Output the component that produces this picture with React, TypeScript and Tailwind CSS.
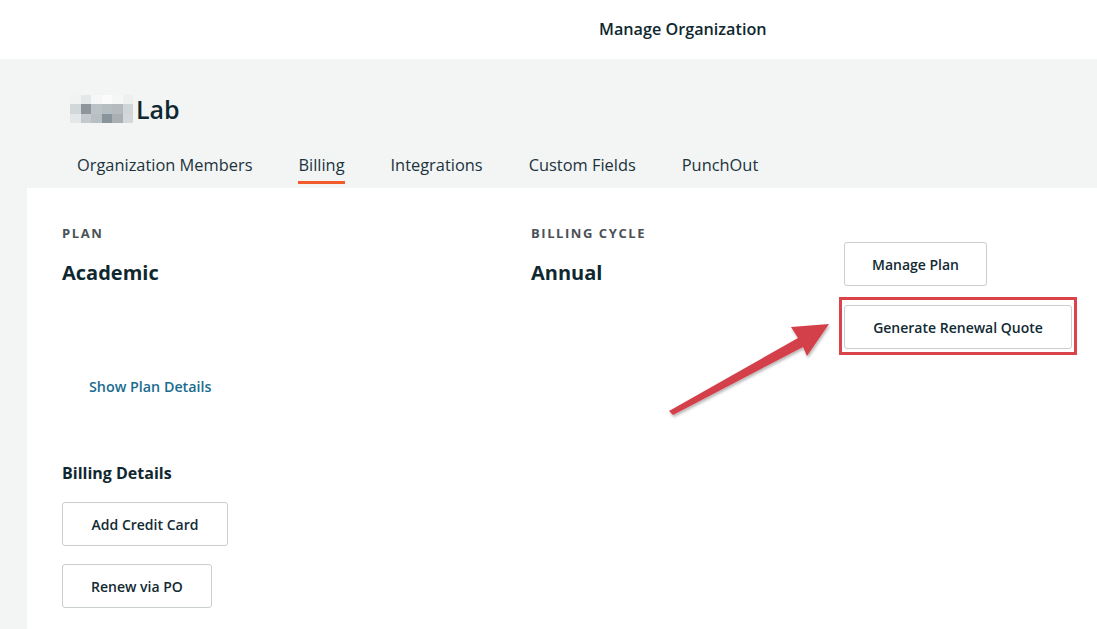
import React from 'react'

const font = { fontFamily: '"Open Sans", "Liberation Sans", sans-serif' }

const tabs = ['Organization Members', 'Billing', 'Integrations', 'Custom Fields', 'PunchOut']

function Pixelated() {
  // censored org name: a coarse mosaic of greys
  const rows = [
    ['bg-[#f1f3f3]', 'bg-[#e4e8e9]', 'bg-[#f6f7f7]', 'bg-[#fbfbfb]', 'bg-[#f5f6f6]', 'bg-[#eef0f0]'],
    ['bg-[#d2d7d9]', 'bg-[#8c969b]', 'bg-[#bcc3c6]', 'bg-[#b7bec1]', 'bg-[#b4bbbe]', 'bg-[#d0d5d7]'],
    ['bg-[#e3e7e8]', 'bg-[#c3c9cc]', 'bg-[#b8bfc2]', 'bg-[#88939a]', 'bg-[#a8b0b4]', 'bg-[#d3d8da]'],
  ]
  return (
    <div className="flex flex-col">
      {rows.map((row, i) => (
        <div key={i} className="flex">
          {row.map((c, j) => (
            <div key={j} className={`h-[9.5px] w-[10.5px] ${c}`} />
          ))}
        </div>
      ))}
    </div>
  )
}

function OutlineButton({ children, className = '' }: { children: React.ReactNode; className?: string }) {
  return (
    <button
      className={`flex h-[44px] items-center justify-center rounded-[3px] border border-[#c9ced1] bg-white text-[14px] font-semibold text-[#112a33] ${className}`}
    >
      {children}
    </button>
  )
}

export default function App() {
  return (
    <div className="relative min-h-screen w-full overflow-hidden bg-[#f3f5f5] text-[#112a33]" style={font}>
      <header className="flex h-[59px] items-center bg-white pl-[599px]">
        <span className="text-[16.2px] font-semibold text-[#0f2830]">Manage Organization</span>
      </header>

      <div className="flex items-center pl-[70px] pt-[35px]">
        <Pixelated />
        <span className="ml-[3px] text-[25px] font-semibold leading-[30px] text-[#0f2830]">Lab</span>
      </div>

      <nav className="mt-[30px] flex gap-[46px] pl-[77px]">
        {tabs.map((t) => (
          <div key={t} className="flex flex-col items-stretch">
            <span className="text-[16.4px] leading-[22px] text-[#1c333b]">{t}</span>
            <span className={`mt-[5px] h-[3px] ${t === 'Billing' ? 'bg-[#f25b2b]' : 'bg-transparent'}`} />
          </div>
        ))}
      </nav>

      <main className="ml-[27px] mt-[4px] min-h-[460px] bg-white pl-[35px] pt-[37px]">
        <div className="flex">
          <div className="w-[469px]">
            <div className="text-[13px] font-bold uppercase leading-[16px] tracking-[0.12em] text-[#4b5157]">Plan</div>
            <div className="mt-[20px] text-[20px] font-bold leading-[24px] text-[#0f2830]">Academic</div>
            <button className="ml-[27px] mt-[92px] text-[14.3px] font-semibold leading-[20px] text-[#1a6c8f]">
              Show Plan Details
            </button>
          </div>
          <div className="w-[313px]">
            <div className="text-[13px] font-bold uppercase leading-[16px] tracking-[0.12em] text-[#4b5157]">Billing Cycle</div>
            <div className="mt-[20px] text-[20px] font-bold leading-[24px] text-[#0f2830]">Annual</div>
          </div>
          <div className="flex flex-col items-start pt-[17px]">
            <OutlineButton className="w-[143px]">Manage Plan</OutlineButton>
            <div className="relative mt-[19px]">
              <OutlineButton className="w-[228px]">Generate Renewal Quote</OutlineButton>
              <span className="pointer-events-none absolute -bottom-[6px] -left-[5px] -right-[5px] -top-[8px] border-[3px] border-[#d9434a]" />
            </div>
          </div>
        </div>

        <div className="mt-[65px] text-[16px] font-bold leading-[20px] text-[#0f2830]">Billing Details</div>
        <OutlineButton className="mt-[19px] w-[166px]">Add Credit Card</OutlineButton>
        <OutlineButton className="mt-[18px] w-[150px]">Renew via PO</OutlineButton>
      </main>

      <svg className="pointer-events-none absolute left-0 top-0" width="1097" height="629" viewBox="0 0 1097 629">
        <defs>
          <filter id="sh" x="-20%" y="-20%" width="140%" height="140%">
            <feDropShadow dx="1" dy="2" stdDeviation="1.5" floodColor="#000" floodOpacity="0.3" />
          </filter>
        </defs>
        <polygon
          points="669,411 798,338 791,327 829,324 807,356 803,347 673,415"
          fill="#d4414a"
          filter="url(#sh)"
        />
      </svg>
    </div>
  )
}
